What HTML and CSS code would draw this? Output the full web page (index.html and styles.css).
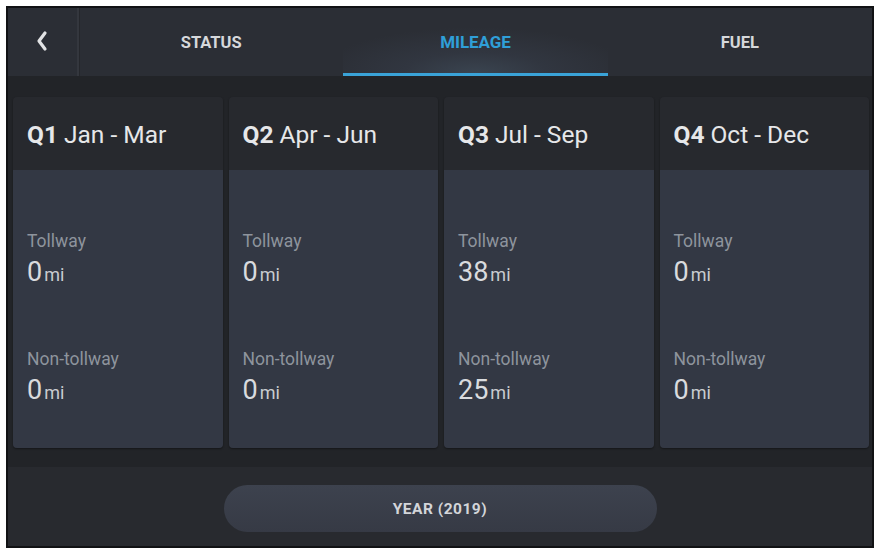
FILE: index.html
```html
<!DOCTYPE html>
<html>
<head>
<meta charset="utf-8">
<link rel="stylesheet" href="styles.css">
</head>
<body>
<div class="frame">
  <nav class="nav">
    <div class="back">
      <svg width="14" height="22" viewBox="0 0 14 22"><path d="M10 3 L4 11 L10 19" fill="none" stroke="#e2e3e5" stroke-width="3.2" stroke-linecap="round" stroke-linejoin="round"/></svg>
    </div>
    <div class="tabs">
      <div class="tab">STATUS</div>
      <div class="tab active">MILEAGE</div>
      <div class="tab">FUEL</div>
    </div>
  </nav>
  <main class="main">
    <div class="card">
      <div class="card-head"><b>Q1</b> Jan - Mar</div>
      <div class="card-body">
        <div class="label">Tollway</div>
        <div class="value">0<span class="unit">mi</span></div>
        <div class="label second">Non-tollway</div>
        <div class="value">0<span class="unit">mi</span></div>
      </div>
    </div>
    <div class="card">
      <div class="card-head"><b>Q2</b> Apr - Jun</div>
      <div class="card-body">
        <div class="label">Tollway</div>
        <div class="value">0<span class="unit">mi</span></div>
        <div class="label second">Non-tollway</div>
        <div class="value">0<span class="unit">mi</span></div>
      </div>
    </div>
    <div class="card">
      <div class="card-head"><b>Q3</b> Jul - Sep</div>
      <div class="card-body">
        <div class="label">Tollway</div>
        <div class="value">38<span class="unit">mi</span></div>
        <div class="label second">Non-tollway</div>
        <div class="value">25<span class="unit">mi</span></div>
      </div>
    </div>
    <div class="card">
      <div class="card-head"><b>Q4</b> Oct - Dec</div>
      <div class="card-body">
        <div class="label">Tollway</div>
        <div class="value">0<span class="unit">mi</span></div>
        <div class="label second">Non-tollway</div>
        <div class="value">0<span class="unit">mi</span></div>
      </div>
    </div>
  </main>
  <footer class="footer">
    <div class="year-btn">YEAR (2019)</div>
  </footer>
</div>
</body>
</html>
```
FILE: styles.css
```css
html, body {
  margin: 0;
  padding: 0;
  background: #ffffff;
}
body {
  padding: 6px;
  font-family: Roboto, "Liberation Sans", sans-serif;
}
.frame {
  box-sizing: border-box;
  width: 868px;
  height: 542px;
  border: 2px solid #111214;
  background: #222428;
  display: flex;
  flex-direction: column;
  overflow: hidden;
}
.nav {
  height: 68px;
  display: flex;
  background: #2b2e35;
  flex-shrink: 0;
}
.back {
  width: 71px;
  border-right: 2px solid #34373e;
  box-shadow: 1px 0 0 #25272c;
  display: flex;
  align-items: center;
  justify-content: center;
  padding-bottom: 2px;
  padding-right: 2px;
  box-sizing: border-box;
}
.tabs {
  flex: 1;
  display: grid;
  grid-template-columns: 1fr 1fr 1fr;
}
.tab {
  display: flex;
  align-items: center;
  justify-content: center;
  padding-top: 3px;
  box-sizing: border-box;
  font-size: 16.5px;
  font-weight: 700;
  color: #d6d8db;
  letter-spacing: 0;
  border-bottom: 3px solid transparent;
}
.tab.active {
  color: #2f9fd8;
  font-size: 17px;
  letter-spacing: -0.1px;
  border-bottom-color: #3aa3d8;
  background: radial-gradient(ellipse 60% 70% at 50% 100%, #3a4450 0%, #313640 45%, #2b2e35 100%);
}
.main {
  height: 391px;
  box-sizing: border-box;
  padding: 21px 3px 19px 5px;
  display: grid;
  grid-template-columns: repeat(4, 1fr);
  gap: 6px;
  background: #222428;
}
.card {
  border-radius: 4px;
  overflow: hidden;
  display: flex;
  flex-direction: column;
  box-shadow: 0 1px 2px rgba(0,0,0,0.4);
}
.card-head {
  height: 73px;
  background: #27292e;
  color: #e6e7e9;
  font-size: 24.5px;
  display: flex;
  align-items: center;
  gap: 6px;
  padding: 0 14px;
  box-sizing: border-box;
  padding-top: 2px;
}
.card-head b {
  font-weight: 700;
}
.card-body {
  flex: 1;
  background: #333844;
  padding: 60px 14px 0;
}
.label {
  font-size: 17.5px;
  line-height: 22px;
  color: #8e949d;
}
.label.second {
  margin-top: 57px;
}
.value {
  font-size: 27px;
  line-height: 32px;
  margin-top: 4px;
  color: #d9dbde;
}
.unit {
  font-size: 18px;
  margin-left: 2px;
  color: #c9ccd0;
}
.footer {
  flex: 1;
  background: #282a2f;
  display: flex;
  align-items: center;
  justify-content: center;
  padding-top: 4px;
}
.year-btn {
  width: 433px;
  height: 47px;
  border-radius: 24px;
  background: linear-gradient(#3d424e, #363a45);
  display: flex;
  align-items: center;
  justify-content: center;
  color: #d3d5d9;
  font-size: 15.5px;
  font-weight: 700;
  letter-spacing: 0.5px;
}
```
